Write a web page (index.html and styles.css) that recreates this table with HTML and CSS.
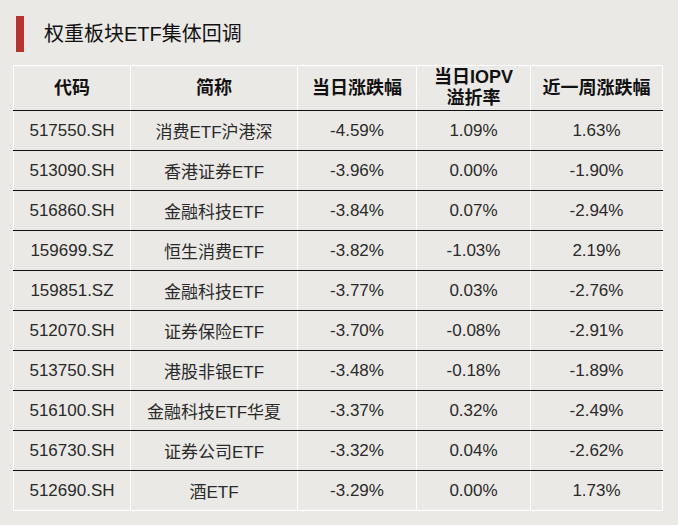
FILE: index.html
```html
<!DOCTYPE html>
<html lang="zh">
<head>
<meta charset="utf-8">
<link rel="stylesheet" href="styles.css">
</head>
<body>
<div class="page">
  <div class="title">
    <span class="bar"></span>
    <h1>权重板块ETF集体回调</h1>
  </div>
  <table class="grid">
    <colgroup>
      <col class="c1"><col class="c2"><col class="c3"><col class="c4"><col class="c5">
    </colgroup>
    <thead>
      <tr><th>代码</th><th>简称</th><th>当日涨跌幅</th><th>当日IOPV<br>溢折率</th><th>近一周涨跌幅</th></tr>
    </thead>
    <tbody>
      <tr><td>517550.SH</td><td>消费ETF沪港深</td><td>-4.59%</td><td>1.09%</td><td>1.63%</td></tr>
      <tr><td>513090.SH</td><td>香港证券ETF</td><td>-3.96%</td><td>0.00%</td><td>-1.90%</td></tr>
      <tr><td>516860.SH</td><td>金融科技ETF</td><td>-3.84%</td><td>0.07%</td><td>-2.94%</td></tr>
      <tr><td>159699.SZ</td><td>恒生消费ETF</td><td>-3.82%</td><td>-1.03%</td><td>2.19%</td></tr>
      <tr><td>159851.SZ</td><td>金融科技ETF</td><td>-3.77%</td><td>0.03%</td><td>-2.76%</td></tr>
      <tr><td>512070.SH</td><td>证券保险ETF</td><td>-3.70%</td><td>-0.08%</td><td>-2.91%</td></tr>
      <tr><td>513750.SH</td><td>港股非银ETF</td><td>-3.48%</td><td>-0.18%</td><td>-1.89%</td></tr>
      <tr><td>516100.SH</td><td>金融科技ETF华夏</td><td>-3.37%</td><td>0.32%</td><td>-2.49%</td></tr>
      <tr><td>516730.SH</td><td>证券公司ETF</td><td>-3.32%</td><td>0.04%</td><td>-2.62%</td></tr>
      <tr><td>512690.SH</td><td>酒ETF</td><td>-3.29%</td><td>0.00%</td><td>1.73%</td></tr>
    </tbody>
  </table>
</div>
</body>
</html>
```

FILE: styles.css
```css
html, body {
  margin: 0;
  padding: 0;
  background: #ebe9e6;
}
body {
  width: 678px;
  height: 525px;
  overflow: hidden;
  font-family: "Liberation Sans", "Noto Sans CJK SC", sans-serif;
}
.page {
  padding: 16px 0 0 13px;
}
.title {
  display: flex;
  align-items: center;
  height: 36px;
  padding-left: 3px;
}
.bar {
  width: 8px;
  height: 36px;
  background: #b83230;
}
.title h1 {
  margin: 0 0 0 20px;
  font-size: 20px;
  font-weight: normal;
  color: #111;
  line-height: 36px;
}
.grid {
  margin-top: 13px;
  border-collapse: collapse;
  table-layout: fixed;
  width: 649px;
  border: 1px solid #fff;
}
.c1 { width: 117px; }
.c2 { width: 167px; }
.c3 { width: 119px; }
.c4 { width: 114px; }
.c5 { width: 132px; }
.grid th, .grid td {
  padding: 0;
  text-align: center;
  border-left: 1px solid #fff;
  border-right: 1px solid #fff;
  white-space: nowrap;
}
.grid th {
  height: 44px;
  font-size: 18px;
  font-weight: bold;
  color: #111;
  line-height: 21px;
  border-bottom: 1px solid #111;
}
.grid td {
  height: 39px;
  font-size: 17px;
  color: #2a2a2a;
  border-bottom: 1px solid #111;
}
.grid tbody tr:last-child td {
  border-bottom: 1px solid #fff;
}
```
